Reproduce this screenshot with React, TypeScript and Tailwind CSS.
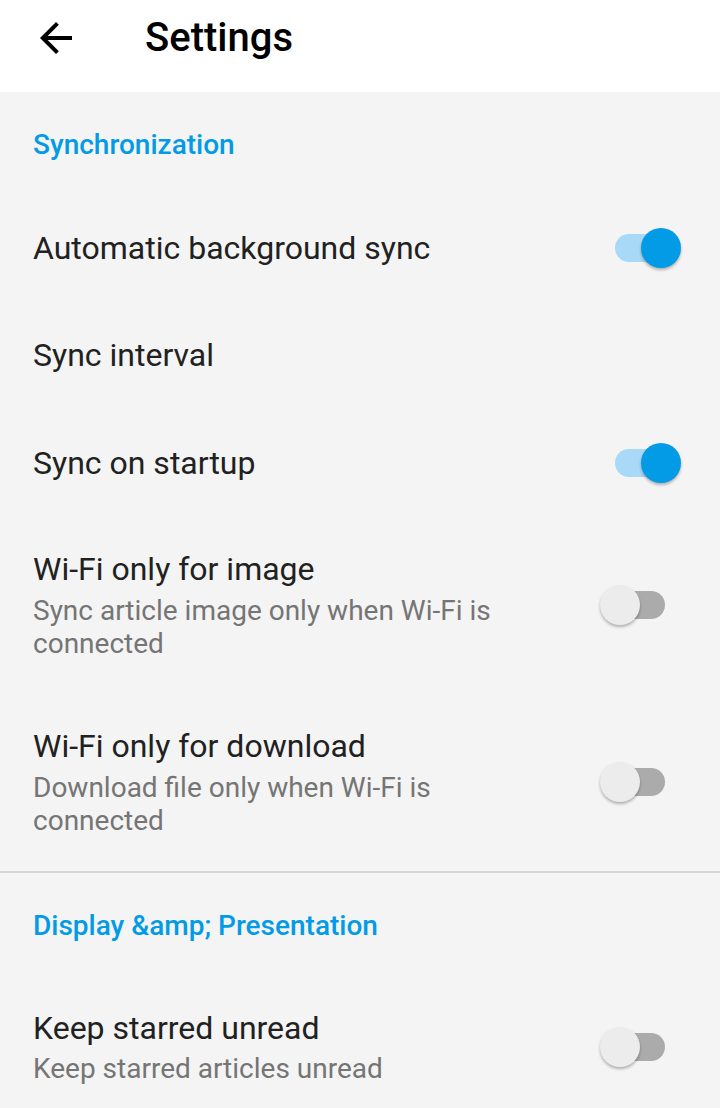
import React from "react";

function Toggle({ on }: { on: boolean }) {
  return (
    <div className="relative w-[81px] h-[40px] shrink-0">
      <div
        className={
          "absolute left-[15px] top-[6px] w-[50px] h-[28px] rounded-full " +
          (on ? "bg-[#a8d9f6]" : "bg-[#ababab]")
        }
      />
      <div
        className={
          "absolute top-0 w-[40px] h-[40px] rounded-full shadow-[0_2px_3px_rgba(0,0,0,0.28)] " +
          (on ? "left-[41px] bg-[#039be5]" : "left-0 bg-[#ececec]")
        }
      />
    </div>
  );
}

function Row({
  title,
  summary,
  toggle,
}: {
  title: string;
  summary?: string;
  toggle?: "on" | "off";
}) {
  if (!summary) {
    return (
      <div className="h-[107.5px] flex items-center pl-[33px] pr-[39px]">
        <div className="flex-1 text-[32px] leading-[37.5px] text-[#212121]">{title}</div>
        {toggle && <Toggle on={toggle === "on"} />}
      </div>
    );
  }
  return (
    <div className="flex items-center pl-[33px] pr-[39px] pt-[34px] pb-[34.5px]">
      <div className="flex-1 pr-[48px]">
        <div className="text-[32px] leading-[37.5px] text-[#212121]">{title}</div>
        <div className="mt-[5px] text-[28px] leading-[33px] text-[#757575]">{summary}</div>
      </div>
      {toggle && <Toggle on={toggle === "on"} />}
    </div>
  );
}

function Category({ title }: { title: string }) {
  return (
    <div className="pl-[33px] pt-[36px] pb-[33.5px] text-[28px] leading-[33px] font-medium text-[#039be5]">
      {title}
    </div>
  );
}

export default function App() {
  return (
    <div
      className="w-[720px] h-[1108px] overflow-hidden bg-[#f4f4f4]"
      style={{ fontFamily: "Roboto, 'Noto Sans', sans-serif" }}
    >
      <div className="h-[92px] bg-white flex items-center pb-[16px]">
        <svg
          className="ml-[32px] w-[48px] h-[48px]"
          viewBox="0 0 24 24"
          fill="#000"
        >
          <path d="M20 11H7.83l5.59-5.59L12 4l-8 8 8 8 1.41-1.41L7.83 13H20v-2z" />
        </svg>
        <div className="ml-[65px] text-[40px] font-medium text-black leading-none">Settings</div>
      </div>
      <Category title="Synchronization" />
      <Row title="Automatic background sync" toggle="on" />
      <Row title="Sync interval" />
      <Row title="Sync on startup" toggle="on" />
      <Row
        title="Wi-Fi only for image"
        summary="Sync article image only when Wi-Fi is connected"
        toggle="off"
      />
      <Row
        title="Wi-Fi only for download"
        summary="Download file only when Wi-Fi is connected"
        toggle="off"
      />
      <div className="h-[2px] bg-[#d6d6d6]" />
      <Category title="Display &amp;amp; Presentation" />
      <Row title="Keep starred unread" summary="Keep starred articles unread" toggle="off" />
    </div>
  );
}
